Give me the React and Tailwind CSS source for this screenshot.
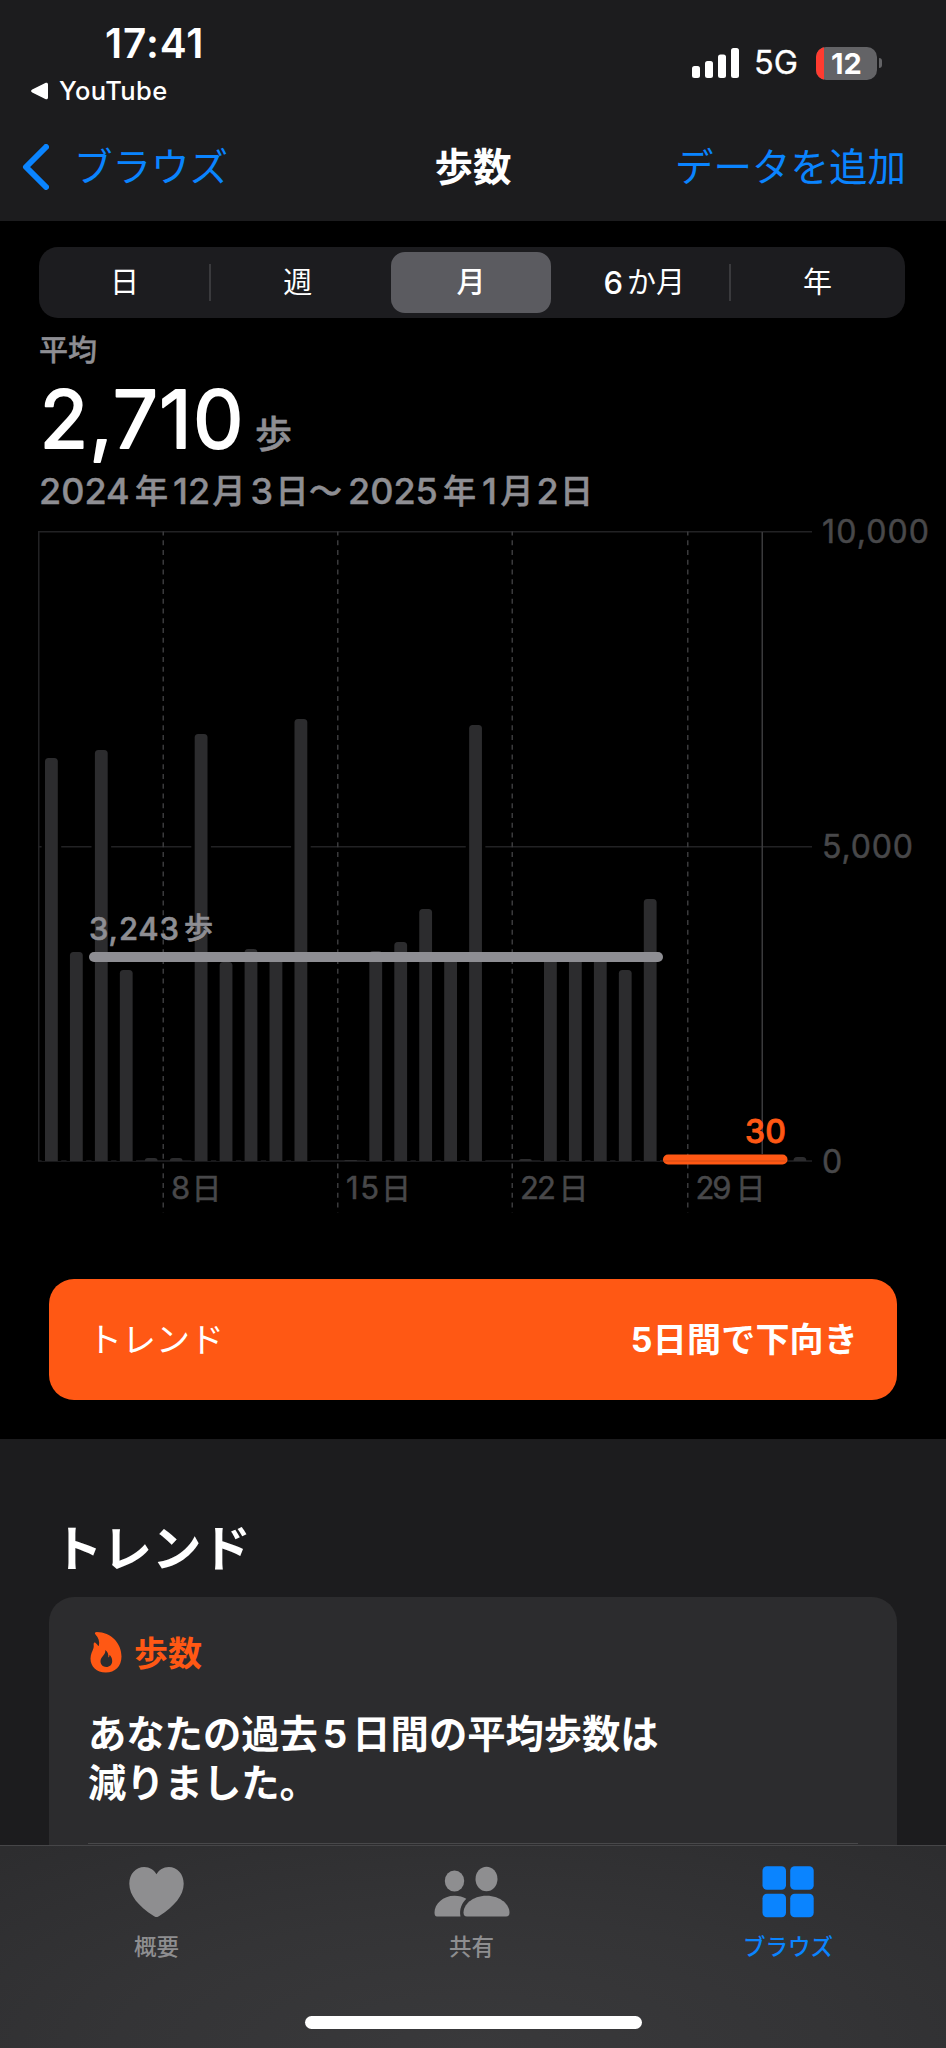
import React from 'react';

const segments = ['日', '週', '月', '6か月', '年'];

// top edge of every day's bar in chart pixels, null = no data
const bars = [
  227, 421, 219, 439, 627, 627, 203, 431, 418, 427, 188, null, 629, 420, 411, 378, 427, 194,
  null, 628, 427, 427, 427, 439, 368, null, null, null, null, null, 626,
];

const BASE = 630;
const STEP = 24.95;

const weekLines = [
  { x: 125, num: '8', numX: 133, numW: 17, dayX: 153.5 },
  { x: 299.5, num: '15', numX: 308, numW: 33, dayX: 343 },
  { x: 474, num: '22', numX: 482, numW: 36, dayX: 520.5 },
  { x: 649.5, num: '29', numX: 657.5, numW: 36, dayX: 697.5 },
];

const dateParts = [
  { t: '2024', num: true, w: 'w-[96px]' },
  { t: '年', w: 'w-[38px]' },
  { t: '12', num: true, w: 'w-[39.5px]' },
  { t: '月', w: 'w-[38px]' },
  { t: '3', num: true, w: 'w-[25px]' },
  { t: '日', w: 'w-[33.5px]' },
  { t: '〜', w: 'w-[39px]' },
  { t: '2025', num: true, w: 'w-[95px]' },
  { t: '年', w: 'w-[39px]' },
  { t: '1', num: true, w: 'w-[18.5px]' },
  { t: '月', w: 'w-[36px]' },
  { t: '2', num: true, w: 'w-[23.5px]' },
  { t: '日', w: 'w-[34px]' },
];

const StatusBar = () => (
  <div className="flex justify-between h-[110px] text-white">
    <div className="pl-[31px]">
      <div className="pl-[74px] pt-[20px] text-[40.5px] leading-[48px] font-semibold tracking-[0.9px]">17:41</div>
      <div className="flex items-center h-[46px]">
        <svg className="w-[17px] h-[18px]" viewBox="0 0 17 18" fill="white">
          <path d="M1.2 7.6 14.3 1c1.5-.7 2.7 0 2.7 1.5v13c0 1.5-1.2 2.2-2.7 1.5L1.2 10.4c-1.5-.8-1.5-2 0-2.8z" />
        </svg>
        <span className="ml-[11px] text-[25.5px] leading-[30px] font-medium tracking-[0.4px]">YouTube</span>
      </div>
    </div>
    <div className="flex items-center h-[32px] mt-[47px] mr-[64px]">
      <svg className="w-[48px] h-[30px]" viewBox="0 0 48 30" fill="white">
        <rect x="0" y="18" width="8" height="12" rx="2.5" />
        <rect x="13" y="13" width="8" height="17" rx="2.5" />
        <rect x="26" y="6.5" width="8" height="23.5" rx="2.5" />
        <rect x="39" y="0" width="8" height="30" rx="2.5" />
      </svg>
      <span className="ml-[14px] w-[62px] text-[32.5px] leading-[36px] [-webkit-text-stroke:0.3px]">5G</span>
      <div className="relative w-[61px] h-[33px] rounded-[10px] bg-[#636366] overflow-hidden flex items-center justify-center">
        <div className="absolute left-0 top-0 w-[7.5px] h-full bg-[#ff3b30]" />
        <span className="relative text-[29px] leading-[33px] font-bold">12</span>
      </div>
      <div className="ml-[2px] w-[3px] h-[10px] rounded-r-full bg-[#636366]" />
    </div>
  </div>
);

const NavBar = () => (
  <div className="grid grid-cols-[1fr_auto_1fr] items-center h-[111px] pt-[2px] text-[38.5px] leading-[56px]">
    <div className="flex items-center pl-[22px] text-[#0a84ff]">
      <svg className="w-[27px] h-[46px]" viewBox="0 0 27 46" fill="none" stroke="currentColor" strokeWidth="6" strokeLinecap="round" strokeLinejoin="round">
        <path d="M24 3 4 23l20 20" />
      </svg>
      <span className="ml-[25px]">ブラウズ</span>
    </div>
    <h1 className="font-bold text-white">歩数</h1>
    <div className="text-right pr-[40px] text-[#0a84ff]">データを追加</div>
  </div>
);

const Segmented = () => (
  <div className="ml-[39px] mr-[41px] mt-[26px] h-[71px] rounded-[19px] bg-[#1c1c1f] grid grid-cols-5 text-white text-[29px] leading-[40px]">
    {segments.map((s, i) => (
      <div key={s} className="relative pl-[6px] pr-[8px] pt-[5px]">
        {i === 2 ? (
          <div className="h-[61px] rounded-[14px] bg-[#5b5b60] flex items-center justify-center font-medium">{s}</div>
        ) : (
          <div className="h-[61px] flex items-center justify-center">
            {i === 3 ? <><span className="text-[31px] font-medium mr-[4px]">6</span>か月</> : s}
          </div>
        )}
        {(i === 0 || i === 3) && <div className="absolute right-px top-[17px] w-[2px] h-[37px] bg-[#3a3a3d]" />}
      </div>
    ))}
  </div>
);

const Summary = () => (
  <div className="pl-[39px] text-[#8e8e93]">
    <div className="mt-[13px] text-[29px] leading-[40px] font-medium [-webkit-text-stroke:0.4px]">平均</div>
    <div className="flex items-end h-[90px]">
      <svg className="w-[216px] h-[90px] overflow-visible" viewBox="0 0 216 90">
        <text x="0.5" y="76.5" textLength="204" fontSize="80" fontWeight="400" fill="white" stroke="white" strokeWidth="1.8" strokeLinejoin="round">2,710</text>
      </svg>
      <span className="text-[37px] leading-[40px] font-medium mb-[6px] [-webkit-text-stroke:0.6px]">歩</span>
    </div>
    <div className="flex items-center h-[48px] mt-[6px] font-medium">
      {dateParts.map((p, i) => (
        <span key={i} className={p.num ? `${p.w} text-[36px] leading-[48px] [-webkit-text-stroke:0.4px]` : `${p.w} text-[33px] leading-[48px] whitespace-nowrap [-webkit-text-stroke:0.6px]`}>
          {p.t}
        </span>
      ))}
    </div>
  </div>
);

const Chart = () => (
  <svg className="block w-[908px] h-[700px] ml-[38px] mt-[16px] overflow-visible" viewBox="0 0 908 700" fontSize="31">
    {/* grid */}
    <g stroke="#222224" strokeWidth="1.5">
      <path d="M.75 0v630M0 .75h774M0 315.75h774M0 630h774" />
    </g>
    <path d="M724.25 1v622" stroke="#3a3a3c" strokeWidth="1.5" />
    {weekLines.map((w) => (
      <path key={w.x} d={`M${w.x + 0.25} .5v681`} stroke="#3a3a3c" strokeWidth="1.5" strokeDasharray="5 4.74" strokeDashoffset="1" />
    ))}

    {/* bars, with a dark gap cut out of the grid around them */}
    {bars.map((top, i) => {
      if (top === null) return null;
      const x = 7 + i * STEP;
      const h = BASE - top;
      const r = Math.min(3.5, h);
      return (
        <g key={i}>
          {h > 10 && <rect x={x - 3.4} y={top} width="19.6" height={h} fill="black" />}
          <path d={`M${x} ${BASE}v${-(h - r)}q0 ${-r} ${r} ${-r}h${12.8 - 2 * r}q${r} 0 ${r} ${r}v${h - r}z`} fill="#2c2c2e" />
        </g>
      );
    })}

    {/* trend lines */}
    <path d="M56 426h564" stroke="#8e8e93" strokeWidth="10" strokeLinecap="round" />
    <path d="M630 628.5h114.5" stroke="#ff5814" strokeWidth="10" strokeLinecap="round" />
    <path d="M626 630h122" stroke="#d14c17" strokeWidth="1" />
    <g fill="#8e8e93" stroke="#8e8e93" strokeWidth=".6" fontWeight="500">
      <text x="51" y="409" textLength="90">3,243</text>
      <text x="146" y="408" fontSize="29">歩</text>
    </g>
    <text x="707" y="612" fontSize="32" fontWeight="500" textLength="41" fill="#ff5814" stroke="#ff5814" strokeWidth=".8">30</text>

    {/* axis labels */}
    <g fill="#48484a" stroke="#48484a" strokeWidth=".5">
      <text x="784" y="12" fontSize="32" textLength="107">10,000</text>
      <text x="784" y="327" fontSize="32" textLength="91">5,000</text>
      <text x="784" y="641.5" fontSize="32">0</text>
      {weekLines.map((w) => (
        <React.Fragment key={w.num}>
          <text x={w.numX} y="668" textLength={w.numW}>{w.num}</text>
          <text x={w.dayX} y="667.5" fontSize="30">日</text>
        </React.Fragment>
      ))}
    </g>
  </svg>
);

const TrendButton = () => (
  <div className="mx-[49px] mt-[48px] h-[121px] rounded-[25px] bg-[#ff5814] text-white flex items-center justify-between px-[39px]">
    <span className="text-[34px] leading-[48px]">トレンド</span>
    <span className="text-[34px] leading-[48px] font-bold tracking-[0.2px]">5日間で下向き</span>
  </div>
);

const Flame = () => (
  <svg className="w-[32px] h-[41px]" viewBox="0 0 32 41" fill="#ff5814">
    <path fillRule="evenodd" d="M5.5 2.5C4.3 1.2 5 0 6.800 0 21 .3 31.500 11 31.500 24.500c0 10-6.500 16-15.700 16C6.500 40.500.5 34.500.5 26.500c0-4.500 2-7.200 3-10.500.5-1.800 0-3.300.2-4.500.2-1.100 1-1.300 1.900-.5 1.200 1 1.800 2.300 3.300 3C9.800 9.500 8.500 5.500 5.500 2.500zM15.300 18c.7 5-4.800 6.500-4.800 11.300 0 3.500 2.500 5.700 5.700 5.700 3.500 0 6-2.300 6-6 0-2.700-1.100-4.600-2.700-6.200.1 1.300-.3 2.400-1.200 2.700.3-3-.5-6-3-7.500z" />
  </svg>
);

const TrendSection = () => (
  <div className="flex-1 mt-[39px] bg-[#1c1c1e] text-white overflow-hidden">
    <h2 className="pl-[53px] pt-[77px] text-[49.5px] leading-[66px] font-bold">トレンド</h2>
    <div className="mx-[49px] mt-[15px] h-[300px] rounded-[25px] bg-[#2c2c2e] px-[39px] pt-[31px]">
      <div className="flex items-center h-[48px] pl-[2px]">
        <Flame />
        <span className="ml-[12px] mt-[3px] text-[34px] leading-[48px] font-bold text-[#ff5814]">歩数</span>
      </div>
      <p className="mt-[34px] text-[38.3px] leading-[49px] font-bold">
        あなたの過去<span className="mx-[5px]">5</span>日間の平均歩数は
        <br />
        減りました。
      </p>
      <div className="mt-[35px] h-px bg-[#48484a]" />
    </div>
  </div>
);

const tabs = [
  {
    label: '概要',
    icon: (
      <svg className="w-[55px] h-[52px]" viewBox="0 0 56 52" fill="currentColor">
        <path d="M28 51.500c-1 0-2-.6-3.200-1.400C10 40.500.3 29.500.3 17.500.3 7.500 7 .5 15.500.5c5.500 0 10 3 12.500 7.500C30.500 3.500 35 .5 40.500.5 49 .5 55.700 7.500 55.700 17.500c0 12-9.700 23-24.500 32.600-1.200.8-2.200 1.400-3.200 1.400z" />
      </svg>
    ),
  },
  {
    label: '共有',
    icon: (
      <svg className="w-[76px] h-[52px]" viewBox="0 0 76 52" fill="currentColor">
        <ellipse cx="20.5" cy="15" rx="9.7" ry="10.5" />
        <ellipse cx="52.5" cy="13" rx="11" ry="12.2" />
        <path d="M3 50.500C1.300 50.500 .5 49 .5 46.500.5 38 9 29.700 20.500 29.700c4.500 0 8.500 1 11.800 3C28 37 25 43 26.500 50.500z" />
        <path d="M33 50.500c-2.500 0-3.500-1.500-3.500-4C29.500 39 38 29.700 52.500 29.700S75.500 39 75.500 46.500c0 2.500-1 4-3.500 4z" />
      </svg>
    ),
  },
  {
    label: 'ブラウズ',
    active: true,
    icon: (
      <svg className="w-[52px] h-[52px]" viewBox="0 0 52 52" fill="currentColor">
        <rect x=".5" y=".3" width="23.5" height="23.5" rx="4.5" />
        <rect x="28.2" y=".3" width="23.5" height="23.5" rx="4.5" />
        <rect x=".5" y="27.8" width="23.5" height="23.5" rx="4.5" />
        <rect x="28.2" y="27.8" width="23.5" height="23.5" rx="4.5" />
      </svg>
    ),
  },
];

const TabBar = () => (
  <div className="h-[203px] border-t border-[#464648] bg-[radial-gradient(ellipse_75%_130%_at_50%_100%,#39393b_0%,#343436_50%,#2d2d2f_100%)]">
    <div className="grid grid-cols-[313px_317px_316px] h-[170px]">
      {tabs.map((t) => (
        <div key={t.label} className={t.active ? 'flex flex-col items-center pt-[20px] text-[#0a84ff]' : 'flex flex-col items-center pt-[20px] text-[#8e8e90]'}>
          {t.icon}
          <span className="mt-[13px] text-[22.5px] leading-[32px] font-medium">{t.label}</span>
        </div>
      ))}
    </div>
    <div className="mx-auto w-[337px] h-[13px] rounded-full bg-white" />
  </div>
);

const App = () => {
  return (
    <div className="w-[946px] h-[2048px] bg-black flex flex-col overflow-hidden font-['Inter','Noto_Sans_CJK_JP',sans-serif]" lang="ja">
      <header className="bg-[#1c1c1e] h-[221px] shrink-0">
        <StatusBar />
        <NavBar />
      </header>
      <Segmented />
      <Summary />
      <Chart />
      <TrendButton />
      <TrendSection />
      <TabBar />
    </div>
  );
};

export default App;
